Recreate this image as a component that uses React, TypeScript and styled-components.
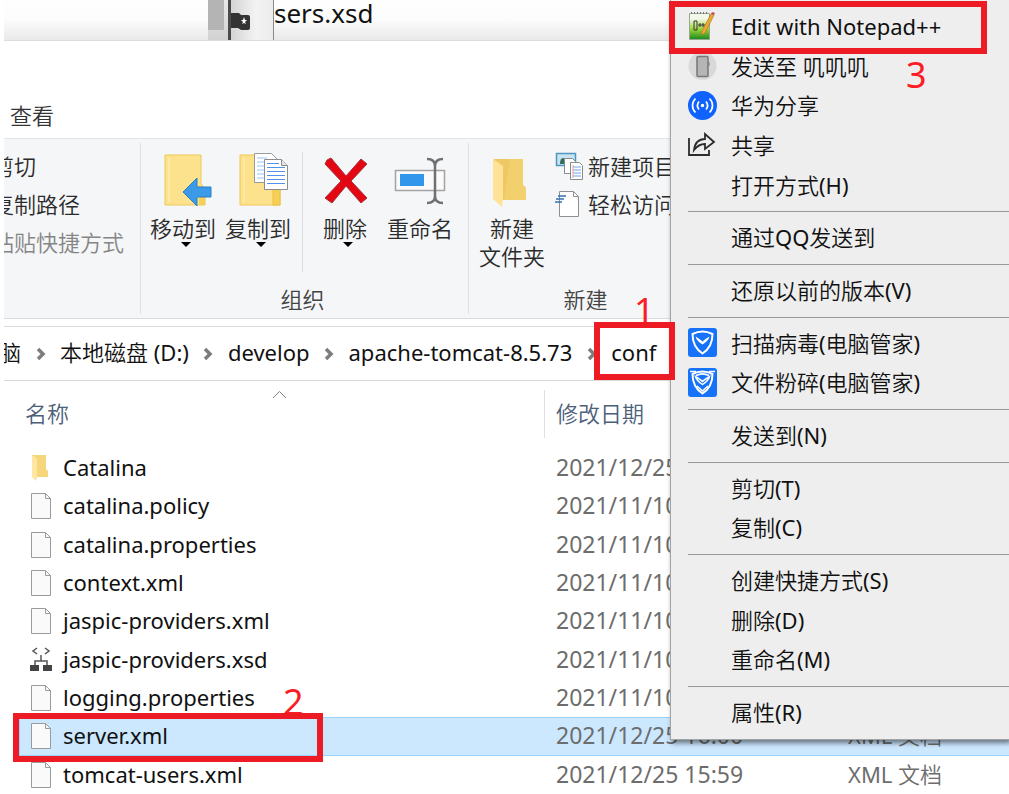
import React from "react";
import styled, { createGlobalStyle } from "styled-components";

const Global = createGlobalStyle`
  *, *::before, *::after { box-sizing: border-box; }
  body {
    margin: 0;
    background: #fff;
    color: #111;
    font-family: "Noto Sans", "Noto Sans CJK SC DemiLight", "Noto Sans CJK SC", sans-serif;
    font-size: 22px;
    line-height: 28px;
    overflow: hidden;
  }
  button {
    font: inherit;
    color: inherit;
    background: none;
    border: 0;
    padding: 0;
    margin: 0;
    text-align: left;
  }
  svg { display: block; flex: none; }
`;

const Desktop = styled.div`
  position: relative;
  min-height: 100vh;
  padding-left: 4px;
  overflow: hidden;
`;

/* ---------- window behind ---------- */

const BackWindow = styled.div`
  display: flex;
  height: 41px;
  border-bottom: 1px solid #dcdcdc;
  background: linear-gradient(#fefefe 0%, #fcfcfc 50%, #e9e9e9 100%);
`;

const BackPane = styled.div`
  width: 204px;
`;

const ScrollTrack = styled.div`
  width: 20px;
  background: linear-gradient(#e8e8e8, #d2d2d2);
`;

const ScrollThumb = styled.div`
  width: 16px;
  height: 30px;
  background: #b4b4b4;
`;

const BackSidebar = styled.div`
  width: 46px;
  padding-top: 12px;
  border-left: 3px solid #4a4a4a;
  border-right: 1px solid #8a8a8a;
  background: linear-gradient(90deg, #d4d4d4, #f3f3f3 60%, #ececec);
`;

const BackText = styled.span`
  font-size: 26px;
  line-height: 26px;
`;

/* ---------- explorer window ---------- */

const Explorer = styled.main`
  overflow: hidden;
`;

const TabRow = styled.nav`
  display: flex;
  align-items: flex-end;
  height: 98px;
  padding: 0 6px 9px;
  color: #333;
  border-bottom: 1px solid #e3e4e6;
`;

const Ribbon = styled.section`
  display: flex;
  height: 180px;
  padding: 4px 0;
  color: #2b2b2b;
  background: #f5f6f8;
  border-bottom: 1px solid #dadbdd;
`;

const Group = styled.div<{ $width: number }>`
  display: flex;
  flex-direction: column;
  justify-content: space-between;
  flex: none;
  width: ${(p) => p.$width}px;
  border-right: 1px solid #dfe0e3;
`;

const GroupBody = styled.div`
  display: flex;
`;

const GroupLabel = styled.div`
  height: 29px;
  padding-right: 4px;
  color: #444;
  text-align: center;
`;

const ClipboardList = styled.div`
  display: flex;
  flex-direction: column;
  gap: 10px;
  margin-left: -12px;
  padding-top: 9px;
  white-space: nowrap;
`;

const ClipButton = styled.button<{ $disabled?: boolean }>`
  height: 28px;
  color: ${(p) => (p.$disabled ? "#858585" : "#2b2b2b")};
`;

const BigButton = styled.button<{ $width: number }>`
  display: flex;
  flex-direction: column;
  align-items: center;
  width: ${(p) => p.$width}px;
  padding-top: 10px;
  text-align: center;
  white-space: nowrap;
`;

const BigIcon = styled.span`
  height: 61px;
`;

const DropArrow = styled.span`
  width: 0;
  height: 0;
  margin-left: 6px;
  border: 5px solid transparent;
  border-top: 5px solid #000;
  border-bottom: 0;
`;

const ThinRule = styled.span`
  width: 1px;
  height: 120px;
  margin: 9px 0 0 11px;
  background: #dcdde0;
`;

const SmallList = styled.div`
  display: flex;
  flex-direction: column;
  gap: 10px;
  padding-top: 9px;
`;

const SmallButton = styled.button`
  display: flex;
  align-items: center;
  gap: 4px;
  height: 28px;
  white-space: nowrap;
`;

const AddressBar = styled.nav`
  display: flex;
  align-items: center;
  height: 55px;
  margin-top: 7px;
  padding-bottom: 3px;
  border: 1px solid #d9d9d9;
  border-width: 1px 0;
  white-space: nowrap;
`;

const Crumb = styled.a`
  color: #111;
  text-decoration: none;
  &:first-child { margin-left: -5px; }
`;

const Separator = styled.span`
  display: flex;
  justify-content: center;
  flex: none;
  width: 39px;
  padding-top: 3px;
`;

/* ---------- file list ---------- */

const FileTable = styled.table`
  width: calc(100% - 15px);
  height: 413px;
  margin-left: 15px;
  border-spacing: 0;
  table-layout: fixed;
`;

const HeadCell = styled.th<{ $width?: number; $pad: number }>`
  position: relative;
  width: ${(p) => (p.$width ? p.$width + "px" : "auto")};
  height: 68px;
  padding: 0 0 4px ${(p) => p.$pad}px;
  color: #4c607a;
  font-weight: 400;
  text-align: left;
  &:first-child::after {
    content: "";
    position: absolute;
    top: 9px;
    right: 0;
    width: 1px;
    height: 48px;
    background: #e0e0e0;
  }
`;

const SortMark = styled.svg`
  position: absolute;
  top: 9px;
  left: 253px;
`;

const FileRow = styled.tr<{ $selected: boolean }>`
  td {
    background: ${(p) => (p.$selected ? "#cce8ff" : "none")};
    border: solid ${(p) => (p.$selected ? "#99d1ff" : "transparent")};
    border-width: 1px 0;
  }
  td:first-child { border-left-width: 1px; }
`;

const FileCell = styled.td`
  padding: 0 0 2px 11px;
  color: #6d6d6d;
  white-space: nowrap;
`;

const DateCell = styled(FileCell)`
  font-size: 23px;
`;

const NameCell = styled(FileCell)`
  padding: 0 0 0 10px;
  color: #111;
`;

const FileName = styled.div`
  display: flex;
  align-items: center;
  gap: 11px;
  height: 28px;
  span { padding-bottom: 2px; }
`;

/* ---------- context menu ---------- */

const Menu = styled.ul`
  position: absolute;
  top: 0;
  left: 670px;
  right: 0;
  display: flex;
  flex-direction: column;
  min-height: 740px;
  margin: 0;
  padding: 7px 0 6px 17px;
  list-style: none;
  background: #eee;
  border: solid #a3a3a3;
  border-width: 0 0 1px 1px;
  box-shadow: 2px 3px 5px rgba(0, 0, 0, 0.5);
`;

const MenuItem = styled.li`
  flex: 1 1 39px;
  display: flex;
`;

const MenuButton = styled.button`
  display: flex;
  align-items: center;
  gap: 14px;
  width: 100%;
  padding-bottom: 2px;
  white-space: nowrap;
`;

const MenuIcon = styled.span`
  flex: none;
  width: 29px;
`;

const MenuRule = styled.li`
  flex: none;
  height: 13px;
  padding-top: 6px;
  &::before {
    content: "";
    display: block;
    height: 1px;
    background: #999;
  }
`;

/* ---------- red marks over the windows ---------- */

const Frame = styled.div<{ $x: number; $y: number; $w: number; $h: number }>`
  position: absolute;
  left: ${(p) => p.$x}px;
  top: ${(p) => p.$y}px;
  width: ${(p) => p.$w}px;
  height: ${(p) => p.$h}px;
  border: 6px solid #ed1c24;
  pointer-events: none;
`;

const StepNumber = styled.span<{ $x: number; $y: number }>`
  position: absolute;
  left: ${(p) => p.$x}px;
  top: ${(p) => p.$y}px;
  color: #fb1c24;
  font-size: 36px;
  line-height: 36px;
`;

/* ---------- icons ---------- */

const MoveToIcon = () => (
  <svg width="60" height="56" viewBox="-10 2 60 56">
    <path d="M2 4h36v29l4 4v17H2z" fill="#fde28d" stroke="#ecc754" />
    <path d="M36 34l6 4v16h-6z" fill="#f6cf57" />
    <path d="M6 7v44" stroke="#fff0b8" />
    <path d="M20 41l14-14v9h14v10H34v9z" fill="#3b9be8" stroke="#2a7fc6" />
  </svg>
);

const CopyToIcon = () => (
  <svg width="60" height="56" viewBox="-10 2 60 56">
    <path d="M2 4h30v32h10v18H2z" fill="#fde28d" stroke="#ecc754" />
    <path d="M35 36h7v18h-7z" fill="#f6cf57" stroke="#ecc13f" />
    <path d="M6 7v44" stroke="#fff0b8" />
    <path d="M16.500 2.500h17l6 6v23h-23z" fill="#fff" stroke="#9a9a9a" />
    <path d="M19 7h10M19 11h7M19 15h7M19 19h7M19 23h7M19 27h7" stroke="#9cc3f4" />
    <path d="M26.500 8.500h17l6 6v24h-23z" fill="#fff" stroke="#8c8c8c" />
    <path d="M43.500 8.500v6h6" fill="#e4e4e4" stroke="#8c8c8c" />
    <path d="M29 12.500h12M29 16.500h18M29 20.500h18M29 24.500h18M29 28.500h18M29 32.500h18" stroke="#4f93ea" />
  </svg>
);

const DeleteIcon = () => (
  <svg width="48" height="56" viewBox="0 0 48 56">
    <path
      d="M6 7l4-2 15 18L40 6l6 5-16 17 16 17-6 5-15-17-14 17-7-5 16-17L4 11z"
      fill="#e30613"
      stroke="#a8323a"
    />
  </svg>
);

const RenameIcon = () => (
  <svg width="52" height="56" viewBox="0 0 52 56">
    <path d="M1.500 17.500h49v20h-49z" fill="#fafafa" stroke="#a3a3a3" strokeWidth="1.500" />
    <path d="M6 21h24v12H6z" fill="#3297ea" />
    <path
      d="M33 6c5 0 8 2 8 7 0-5 3-7 8-7M41 11v34M33 50c5 0 8-2 8-7 0 5 3 7 8 7"
      fill="none"
      stroke="#707070"
      strokeWidth="2.500"
    />
  </svg>
);

const NewFolderIcon = () => (
  <svg width="42" height="56" viewBox="1 0 42 56">
    <path d="M4 6h29v26l3 3v12H4z" fill="#eec863" />
    <path d="M20 6h13v26l3 3v12H14z" fill="#f2d06e" />
    <path d="M3 6l10 7v32l-1 9-9-8z" fill="#ffe296" />
  </svg>
);

const NewItemIcon = () => (
  <svg width="29" height="28" viewBox="0 0 29 28">
    <path d="M1.500 1.500h19v12h-19z" fill="#c9e3f2" stroke="#4f97bf" strokeWidth="1.500" />
    <path d="M5 12c0-4 1-6 3-6s3 2 3 6z" fill="#2f6d5e" />
    <path d="M9.500 6.500h8l3 3v12h-11z" fill="#fff" stroke="#8a8a8a" />
    <path d="M15.500 10.500h9l3 3v14h-12z" fill="#fff" stroke="#8a8a8a" />
    <path d="M18 15h8M18 18h8M18 21h8M18 24h8" stroke="#6ea5e8" />
    <path d="M18 13v13" stroke="#e59a9a" />
  </svg>
);

const EasyAccessIcon = () => (
  <svg width="29" height="28" viewBox="0 0 29 28">
    <path d="M4.500 1.500h14l5 5v20h-19z" fill="#fff" stroke="#8f8f8f" />
    <path d="M18.500 1.500v5h5" fill="none" stroke="#8f8f8f" />
    <path d="M3 6h8M1 9h8M0 12h7" stroke="#3474b5" strokeWidth="1.500" />
  </svg>
);

const ChevronIcon = () => (
  <svg width="10" height="14" viewBox="0 0 10 14">
    <path d="M2 2l5 5-5 5" fill="none" stroke="#7d7d7d" strokeWidth="3.500" />
  </svg>
);

const FolderIcon = () => (
  <svg width="22" height="28" viewBox="0 0 22 28">
    <path d="M2 1h14v14l2 2v6H2z" fill="#f6d67a" />
    <path d="M2 1l5 4v19l-1 3-4-4z" fill="#ffe7a3" />
  </svg>
);

const FileIcon = () => (
  <svg width="22" height="28" viewBox="0 0 22 28">
    <path d="M1.500 1.500h14l5 5v20h-19z" fill="#fafafa" stroke="#9b9b9b" />
    <path d="M15.500 1.500v5h5" fill="none" stroke="#9b9b9b" />
  </svg>
);

const SchemaIcon = () => (
  <svg width="22" height="28" viewBox="0 0 22 28">
    <path
      d="M7 2L3 5l4 3M15 2l4 3-4 3M11 9v6M5 20v-5h12v5"
      fill="none"
      stroke="#555"
      strokeWidth="1.500"
    />
    <path d="M0 19h9v6H0zM13 19h9v6h-9z" fill="#444" />
  </svg>
);

const NotepadIcon = () => (
  <svg width="29" height="30" viewBox="0 0 29 30">
    <defs>
      <linearGradient id="np" x1="0" y1="0" x2="0" y2="1">
        <stop offset="0.2" stopColor="#f4f8ea" />
        <stop offset="0.6" stopColor="#9bd43a" />
        <stop offset="1" stopColor="#178a1c" />
      </linearGradient>
    </defs>
    <path d="M1.500 2.500h20v26h-20z" fill="url(#np)" stroke="#9aa694" />
    <path d="M3 2h17" stroke="#777" strokeDasharray="1 2" strokeWidth="2" />
    <path d="M6 10v9M9 10v9M6 10h3M6 19h3M10 14h7M12 12v4M15 12v4" stroke="#333" fill="none" />
    <path d="M14 20l9-17 3 1-9 18-4 2z" fill="#f0a92e" stroke="#a9752a" strokeWidth="0.700" />
    <path d="M23 3l1-2 3 1-1 2z" fill="#c94b5b" />
  </svg>
);

const PhoneIcon = () => (
  <svg width="29" height="28" viewBox="0 0 29 28">
    <circle cx="14.500" cy="14" r="14" fill="#d9d9d9" />
    <rect x="9" y="4.500" width="11" height="20" rx="1" fill="#b5b5b5" stroke="#777" strokeWidth="1.500" />
    <path d="M21 10v4" stroke="#777" />
  </svg>
);

const HuaweiShareIcon = () => (
  <svg width="29" height="29" viewBox="0 0 29 29">
    <circle cx="14.500" cy="14.500" r="14.500" fill="#0f62fe" />
    <circle cx="14.500" cy="14.500" r="1.700" fill="#fff" />
    <path
      d="M11 10.500c-2 2.500-2 5.500 0 8M18 10.500c2 2.500 2 5.500 0 8M7.500 7.500c-4 4-4 10 0 14M21.500 7.500c4 4 4 10 0 14"
      fill="none"
      stroke="#fff"
      strokeWidth="1.700"
    />
  </svg>
);

const ShareIcon = () => (
  <svg width="29" height="28" viewBox="0 0 29 28">
    <path d="M1 7v17h20v-5" fill="none" stroke="#2c2c2c" strokeWidth="1.800" />
    <path
      d="M6 19C7 11 11 8 17 8V3l9 8-9 7v-5c-5 0-8 2-11 6z"
      fill="none"
      stroke="#2c2c2c"
      strokeWidth="1.800"
    />
  </svg>
);

const ShieldIcon = ({ shred = false }: { shred?: boolean }) => (
  <svg width="29" height="29" viewBox="0 0 29 29">
    <rect width="29" height="29" rx="3" fill="#1672f8" />
    <path
      d="M14.500 3.500c4 0 7 1 10 2.500 0 9-3 15-10 19.500C7.500 21 4.500 15 4.500 6c3-1.500 6-2.500 10-2.500z"
      fill="none"
      stroke="#fff"
      strokeWidth="2"
    />
    <path
      d="M7.500 8.500c3 2 5 3 7 5 2-2 4-3 7-5-1 4-4 6-7 8-3-2-6-4-7-8z"
      fill={shred ? "none" : "#fff"}
      stroke="#fff"
      strokeWidth={shred ? 1.500 : 0}
    />
    {shred && (
      <path d="M2 3.500h6M21 3.500h6M9 18l5.500 5 5.500-5M8 7.500c4-2 9-2 13 0" fill="none" stroke="#fff" strokeWidth="1.500" />
    )}
  </svg>
);

const CameraIcon = () => (
  <svg width="19" height="18" viewBox="0 0 19 18">
    <path d="M0 1h8l2 2h7q2 0 2 2v11q0 2-2 2h-7l-3-2H0z" fill="#333" />
    <path d="M13 5l1 3h2l-2 2 1 2-2-1-2 1 1-2-2-2h2z" fill="#fff" />
  </svg>
);

/* ---------- data ---------- */

type FileEntry = {
  name: string;
  kind?: "folder" | "schema";
  date: string;
  type?: string;
  selected?: boolean;
};

const files: FileEntry[] = [
  { name: "Catalina", kind: "folder", date: "2021/12/25" },
  { name: "catalina.policy", date: "2021/11/10" },
  { name: "catalina.properties", date: "2021/11/10" },
  { name: "context.xml", date: "2021/11/10" },
  { name: "jaspic-providers.xml", date: "2021/11/10" },
  { name: "jaspic-providers.xsd", kind: "schema", date: "2021/11/10" },
  { name: "logging.properties", date: "2021/11/10" },
  { name: "server.xml", date: "2021/12/25 16:00", type: "XML 文档", selected: true },
  { name: "tomcat-users.xml", date: "2021/12/25 15:59", type: "XML 文档" },
];

const crumbs = ["脑", "本地磁盘 (D:)", "develop", "apache-tomcat-8.5.73", "conf"];

type Entry = { label: string; icon?: React.ReactNode } | null;

const menu: Entry[] = [
  { label: "Edit with Notepad++", icon: <NotepadIcon /> },
  { label: "发送至 叽叽叽", icon: <PhoneIcon /> },
  { label: "华为分享", icon: <HuaweiShareIcon /> },
  { label: "共享", icon: <ShareIcon /> },
  { label: "打开方式(H)" },
  null,
  { label: "通过QQ发送到" },
  null,
  { label: "还原以前的版本(V)" },
  null,
  { label: "扫描病毒(电脑管家)", icon: <ShieldIcon /> },
  { label: "文件粉碎(电脑管家)", icon: <ShieldIcon shred /> },
  null,
  { label: "发送到(N)" },
  null,
  { label: "剪切(T)" },
  { label: "复制(C)" },
  null,
  { label: "创建快捷方式(S)" },
  { label: "删除(D)" },
  { label: "重命名(M)" },
  null,
  { label: "属性(R)" },
];

const iconFor = (kind?: FileEntry["kind"]) =>
  kind === "folder" ? <FolderIcon /> : kind === "schema" ? <SchemaIcon /> : <FileIcon />;

export default function App() {
  return (
    <Desktop>
      <Global />
      <BackWindow>
        <BackPane />
        <ScrollTrack>
          <ScrollThumb />
        </ScrollTrack>
        <BackSidebar>
          <CameraIcon />
        </BackSidebar>
        <BackText>sers.xsd</BackText>
      </BackWindow>

      <Explorer>
        <TabRow>
          <button type="button">查看</button>
        </TabRow>

        <Ribbon>
          <Group $width={137}>
            <ClipboardList>
              <ClipButton type="button">剪切</ClipButton>
              <ClipButton type="button">复制路径</ClipButton>
              <ClipButton type="button" $disabled>
                粘贴快捷方式
              </ClipButton>
            </ClipboardList>
          </Group>

          <Group $width={328}>
            <GroupBody>
              <BigButton type="button" $width={84}>
                <BigIcon><MoveToIcon /></BigIcon>
                移动到
                <DropArrow />
              </BigButton>
              <BigButton type="button" $width={66}>
                <BigIcon><CopyToIcon /></BigIcon>
                复制到
                <DropArrow />
              </BigButton>
              <ThinRule />
              <BigButton type="button" $width={84}>
                <BigIcon><DeleteIcon /></BigIcon>
                删除
                <DropArrow />
              </BigButton>
              <BigButton type="button" $width={66}>
                <BigIcon><RenameIcon /></BigIcon>
                重命名
              </BigButton>
            </GroupBody>
            <GroupLabel>组织</GroupLabel>
          </Group>

          <Group $width={238}>
            <GroupBody>
              <BigButton type="button" $width={86}>
                <BigIcon><NewFolderIcon /></BigIcon>
                新建
                <br />
                文件夹
              </BigButton>
              <SmallList>
                <SmallButton type="button">
                  <NewItemIcon />
                  新建项目
                </SmallButton>
                <SmallButton type="button">
                  <EasyAccessIcon />
                  轻松访问
                </SmallButton>
              </SmallList>
            </GroupBody>
            <GroupLabel>新建</GroupLabel>
          </Group>
        </Ribbon>

        <AddressBar aria-label="路径">
          {crumbs.map((c, i) => (
            <React.Fragment key={c}>
              {i > 0 && (
                <Separator>
                  <ChevronIcon />
                </Separator>
              )}
              <Crumb href="#">{c}</Crumb>
            </React.Fragment>
          ))}
        </AddressBar>

        <FileTable>
          <thead>
            <tr>
              <HeadCell $width={526} $pad={6}>
                <SortMark width="15" height="9" viewBox="0 0 15 9">
                  <path d="M1 8l6.500-6.500L14 8" fill="none" stroke="#808080" />
                </SortMark>
                名称
              </HeadCell>
              <HeadCell $width={292} $pad={11}>修改日期</HeadCell>
              <HeadCell $pad={11} />
            </tr>
          </thead>
          <tbody>
            {files.map((f) => (
              <FileRow key={f.name} $selected={!!f.selected}>
                <NameCell>
                  <FileName>
                    {iconFor(f.kind)}
                    <span>{f.name}</span>
                  </FileName>
                </NameCell>
                <DateCell>{f.date}</DateCell>
                <FileCell>{f.type}</FileCell>
              </FileRow>
            ))}
          </tbody>
        </FileTable>
      </Explorer>

      <Menu>
        {menu.map((m, i) =>
          m ? (
            <MenuItem key={i}>
              <MenuButton type="button">
                <MenuIcon>{m.icon}</MenuIcon>
                {m.label}
              </MenuButton>
            </MenuItem>
          ) : (
            <MenuRule key={i} role="separator" />
          )
        )}
      </Menu>

      <StepNumber $x={634} $y={293}>1</StepNumber>
      <StepNumber $x={283} $y={684}>2</StepNumber>
      <StepNumber $x={906} $y={57}>3</StepNumber>
      <Frame $x={594} $y={322} $w={81} $h={58} />
      <Frame $x={13} $y={713} $w={310} $h={49} />
      <Frame $x={669} $y={1} $w={318} $h={53} />
    </Desktop>
  );
}
